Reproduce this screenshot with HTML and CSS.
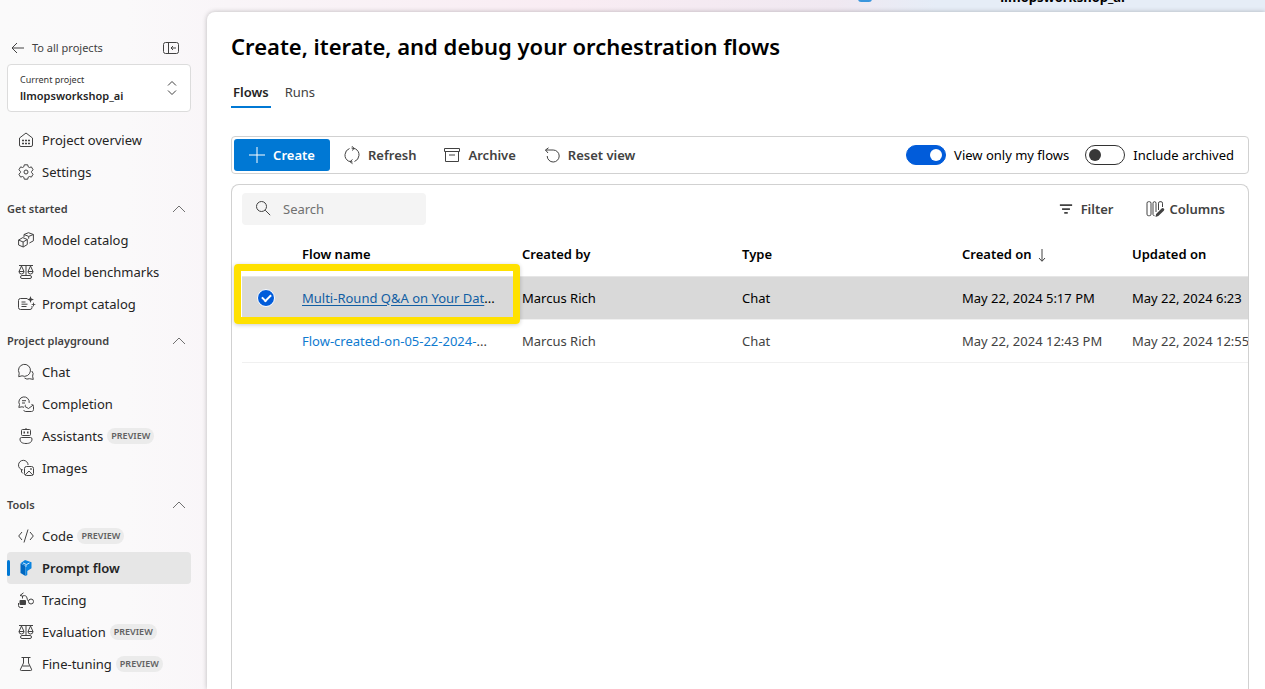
FILE: index.html
```html
<!DOCTYPE html>
<html lang="en">
<head>
<meta charset="utf-8">
<title>Prompt flow</title>
<link rel="stylesheet" href="styles.css">
</head>
<body>
<svg class="defs" aria-hidden="true">
  <symbol id="chevron" viewBox="0 0 16 16"><path d="M2 11 8 5l6 6"/></symbol>
  <symbol id="scales" viewBox="0 0 16 16"><path d="M1 1.500h14M8 1.500v9.500M3.500 2 1 7.500h5zM12.500 2 10 7.500h5zM1 7.500a2.500 2.500 0 0 0 5 0M10 7.500a2.500 2.500 0 0 0 5 0M4 11.500h8a1.500 1.500 0 0 1 0 3H4a1.500 1.500 0 0 1 0-3z"/></symbol>
</svg>
<header class="topbar">
  <span class="topbar-badge"></span>
  <strong class="topbar-project">llmopsworkshop_ai</strong>
</header>
<div class="shell">
  <aside class="sidebar">
    <div class="back-row">
      <a class="back-link" href="#"><svg class="icon back-icon" viewBox="0 0 16 16"><path d="M14 8H2M7 3 2 8l5 5"/></svg>To all projects</a>
      <button class="icon-button" type="button" aria-label="Collapse navigation"><svg class="icon wide" viewBox="0 0 18 16"><rect x="1.500" y="2.500" width="15" height="11" rx="2"/><path d="M6.500 2.500v11M14 8H9M11 6 9 8l2 2"/></svg></button>
    </div>
    <button class="project-picker" type="button">
      <span class="picker-text"><span class="picker-label">Current project</span><span class="picker-name">llmopsworkshop_ai</span></span>
      <svg class="icon picker-icon" viewBox="0 0 16 16"><path d="m4 5.500 4-4 4 4M4 10.500l4 4 4-4"/></svg>
    </button>
    <nav class="nav">
      <a class="nav-item" href="#"><svg class="icon" viewBox="0 0 16 16"><path d="M1.500 6 8 1l6.500 5v7a1.500 1.500 0 0 1-1.500 1.500H3A1.500 1.500 0 0 1 1.500 13z"/><path class="dots" d="M4 8.500h8M4 11.500h8"/></svg>Project overview</a>
      <a class="nav-item" href="#"><svg class="icon" viewBox="0 0 16 16"><path d="m6.300.8-.5 2-1.200.7-2-.6L.9 5.800l1.500 1.500v1.400L.9 10.200l1.700 2.900 2-.6 1.200.7.5 2h3.400l.5-2 1.200-.7 2 .6 1.700-2.900-1.500-1.500V7.300l1.500-1.500-1.700-2.900-2 .6-1.200-.7-.5-2z"/><circle cx="8" cy="8" r="2"/></svg>Settings</a>

      <button class="nav-heading" type="button">Get started<svg class="icon chevron"><use href="#chevron"/></svg></button>
      <a class="nav-item" href="#"><svg class="icon" viewBox="0 0 16 16"><path d="m.6 8 4.200-2.400L9.300 7.500v5L5.200 15 .6 13zM.6 8l4.500 2 4.200-2.500M5.100 10v5M6 5V2.500L10.500.7l4.900 1.800v6.300l-4 2.200M6 2.500l4.700 1.900 4.700-1.900M10.700 4.400v2.300"/></svg>Model catalog</a>
      <a class="nav-item" href="#"><svg class="icon"><use href="#scales"/></svg>Model benchmarks</a>
      <a class="nav-item" href="#"><svg class="icon wide" viewBox="0 0 18 16"><path d="M9.500 2.500h-7a2 2 0 0 0-2 2v7a2 2 0 0 0 2 2H12a2 2 0 0 0 2-2V10M3.500 6h4M3.500 8.200h6M3.500 10.500h5"/><path class="solid" d="m12.500 0 .9 2.600 2.600.9-2.600.9-.9 2.600-.9-2.600L9 3.500l2.600-.9zM15.500 6l.6 1.900 1.900.6-1.900.6-.6 1.900-.6-1.900-1.900-.6 1.900-.6z"/></svg>Prompt catalog</a>

      <button class="nav-heading" type="button">Project playground<svg class="icon chevron"><use href="#chevron"/></svg></button>
      <a class="nav-item" href="#"><svg class="icon" viewBox="0 0 16 16"><path d="M1.200 9.200A6 6 0 1 1 4 11.800l-3.300.9zM6.500 14a5 5 0 0 0 5 .7l3.800.7-.7-3.200a4.500 4.500 0 0 0-.8-5.200"/></svg>Chat</a>
      <a class="nav-item" href="#"><svg class="icon" viewBox="0 0 16 16"><path d="M6 11.300 4 10.800l-3.200.6.7-2.800a5.200 5.200 0 1 1 9.700-1.700M4 4.700h4M4 7h3M7 10.500c0-1 .5-1.500 1-1.500M13.500 8.500c1.300 0 2 .8 2 2v3c0 1.200-.8 2-2 2H8c-1 0-2-.5-2.500-1.500M7 10.500l3.500 2L15.300 9"/></svg>Completion</a>
      <a class="nav-item" href="#"><svg class="icon" viewBox="0 0 16 16"><rect x="3.500" y="1.500" width="9" height="6" rx="1"/><path d="M8 0v1.500M3.500 9.500h9a1.500 1.500 0 0 1 1.500 1.500c0 3-2 4.500-6 4.500S2 14 2 11a1.500 1.500 0 0 1 1.500-1.500z"/><path class="eyes" d="M5.500 4.500h1.500M9 4.500h1.500"/></svg>Assistants<span class="tag">PREVIEW</span></a>
      <a class="nav-item" href="#"><svg class="icon" viewBox="0 0 16 16"><path d="M4.800 9.900A4.800 4.800 0 1 1 10.100 5"/><rect x="6.500" y="6.500" width="9" height="9" rx="2"/><path d="m7.200 15 3.800-4 3.800 4M3.500 10v2L5 13.500"/><circle cx="13" cy="9" r=".5"/></svg>Images</a>

      <button class="nav-heading" type="button">Tools<svg class="icon chevron"><use href="#chevron"/></svg></button>
      <a class="nav-item" href="#"><svg class="icon" viewBox="0 0 16 16"><path d="M4 4 .7 8 4 12M12 4l3.300 4L12 12M10 1.500l-4 13"/></svg>Code<span class="tag">PREVIEW</span></a>
      <a class="nav-item selected" href="#" aria-current="page"><svg class="icon" viewBox="0 0 16 16"><path class="flow-dark" d="M2.500 3.500 7.500 6v10l-5-3z"/><path class="flow-mid" d="M2.500 3.200 7 0l6.500 2.300v6L9.300 11v4l-1.800 1V6z"/><path class="flow-line" d="M5 3l3.500 1.500 3-1.500M8 4.800v2"/></svg>Prompt flow</a>
      <a class="nav-item" href="#"><svg class="icon" viewBox="0 0 16 16"><path d="M4.500 6.500V4L2 3.500 5.500.8M4.500 4c3-1 4 0 4.500 2s.5 3 2 3M.5 11v2.500a2 2 0 0 0 2 2H5"/><rect class="solid" x="1.500" y="8" width="6.500" height="5" rx="1"/><circle cx="13" cy="9.500" r="2.500"/></svg>Tracing</a>
      <a class="nav-item" href="#"><svg class="icon"><use href="#scales"/></svg>Evaluation<span class="tag">PREVIEW</span></a>
      <a class="nav-item" href="#"><svg class="icon" viewBox="0 0 16 16"><path d="M3.500 1.500h9M5.500 1.500V7l-3 6.200a.9.900 0 0 0 .8 1.300h9.400a.9.900 0 0 0 .8-1.300l-3-6.200V1.500M4.500 10h7"/></svg>Fine-tuning<span class="tag">PREVIEW</span></a>
    </nav>
  </aside>

  <main class="main">
    <h1 class="title">Create, iterate, and debug your orchestration flows</h1>
    <div class="tabs" role="tablist">
      <button class="tab active" type="button" role="tab" aria-selected="true">Flows</button>
      <button class="tab" type="button" role="tab" aria-selected="false">Runs</button>
    </div>

    <div class="toolbar">
      <button class="command primary" type="button"><svg class="icon" viewBox="0 0 16 16"><path d="M8 0v16M0 8h16"/></svg>Create</button>
      <button class="command" type="button"><svg class="icon refresh" viewBox="0 0 16 18"><path d="M5.500 2.500a7 7 0 0 0-1 12.600M10.500 15.500a7 7 0 0 0 1-12.600M4.500 15.100 8.500 16M11.500 2.900 7.500 2M8 .2 10.200 2.500 8 4.500M8.500 13.500 6 15.700l2.500 2"/></svg>Refresh</button>
      <button class="command" type="button"><svg class="icon" viewBox="0 0 16 16"><path d="M.5 1.500h15v3H.5zM1.500 4.500v10h13v-10M5 8h6"/></svg>Archive</button>
      <button class="command" type="button"><svg class="icon" viewBox="0 0 16 16"><path d="M4.500.8 1.500 3l2.500 3M1.500 3h7.700a6 6 0 1 1-6 6"/></svg>Reset view</button>
      <div class="switches">
        <label class="switch-label"><input class="switch" type="checkbox" role="switch" checked>View only my flows</label>
        <label class="switch-label"><input class="switch" type="checkbox" role="switch">Include archived</label>
      </div>
    </div>

    <section class="panel">
      <div class="panel-tools">
        <label class="search"><svg class="icon" viewBox="0 0 16 16"><circle cx="6.500" cy="5.500" r="5"/><path d="m10.200 9.200 5 5"/></svg><input class="search-input" type="text" placeholder="Search" aria-label="Search"></label>
        <div class="panel-actions">
          <button class="command" type="button"><svg class="icon filter" viewBox="0 0 16 16"><path d="M1 3.500h14M3.500 8h9M6 12.500h4"/></svg>Filter</button>
          <button class="command" type="button"><svg class="icon wide" viewBox="0 0 18 16"><rect x="1" y=".7" width="4" height="14" rx="1.500"/><path d="M7 13.500V2.200a1.500 1.500 0 0 1 1.500-1.500 1.500 1.500 0 0 1 1.500 1.500V11M7 13.500a1.500 1.500 0 0 0 1.500 1.200M12.500 9V2.200A1.500 1.500 0 0 1 14 .7h1a1.500 1.500 0 0 1 1.500 1.500V6"/><path class="solid" d="m9.500 16 .6-3 5.500-5.500a1.500 1.500 0 0 1 2.200 2.200L12.300 15z"/></svg>Columns</button>
        </div>
      </div>
      <div class="table-wrap">
        <table class="flows">
          <colgroup><col class="col-check"><col class="col-wide"><col class="col-wide"><col class="col-wide"><col class="col-date"><col class="col-date"></colgroup>
          <thead>
            <tr><th></th><th>Flow name</th><th>Created by</th><th>Type</th><th>Created on<svg class="icon sort" viewBox="0 0 16 16"><path d="M8 2v12M5 11l3 3.300L11 11"/></svg></th><th>Updated on</th></tr>
          </thead>
          <tbody>
            <tr class="row-selected"><td><input class="row-check" type="checkbox" aria-label="Select Multi-Round Q&amp;A" checked></td><td><a class="flow-link" href="#">Multi-Round Q&amp;A on Your Dat</a>...</td><td>Marcus Rich</td><td>Chat</td><td>May 22, 2024 5:17 PM</td><td>May 22, 2024 6:23</td></tr>
            <tr><td></td><td><a class="flow-link" href="#">Flow-created-on-05-22-2024-</a>...</td><td>Marcus Rich</td><td>Chat</td><td>May 22, 2024 12:43 PM</td><td>May 22, 2024 12:55</td></tr>
          </tbody>
        </table>
      </div>
      <div class="highlight"></div>
    </section>
  </main>
</div>
</body>
</html>
```
FILE: styles.css
```css
* { box-sizing: border-box; }

body {
  margin: 0;
  height: 100vh;
  display: flex;
  flex-direction: column;
  overflow: hidden;
  font-family: "Noto Sans", "Open Sans", sans-serif;
  font-size: 13px;
  line-height: 20px;
  color: #242424;
  background: linear-gradient(90deg, #fafafa 0%, #faf9fa 10%, #f9f5f8 18%, #f9ecf3 45%, #f0e8f1 66%, #e6edf7 74%, #e6edf7 100%);
}

button, input { font: inherit; color: inherit; }
button { background: none; border: 0; padding: 0; cursor: pointer; }
a { color: inherit; text-decoration: none; }

.defs { position: absolute; width: 0; height: 0; }

.icon {
  width: 16px;
  height: 16px;
  flex: none;
  fill: none;
  stroke: #424242;
  stroke-width: 1;
  overflow: visible;
}
.wide { width: 18px; }
.filter { width: 14px; stroke-width: 2; }
.refresh { height: 18px; }
.solid { fill: #424242; stroke: none; }
.dots { stroke-width: 1.5; stroke-dasharray: 2 1; }
.eyes { stroke-width: 2; }

.topbar {
  height: 12px;
  flex: none;
  display: flex;
  align-items: flex-end;
  justify-content: flex-end;
  gap: 128px;
  padding: 0 140px 5px 0;
  overflow: hidden;
}
.topbar-badge { width: 14px; height: 16px; margin-bottom: 5px; background: #3a96dd; border-radius: 3px; }
.topbar-project { font-size: 13px; font-weight: 700; color: #000; }

.shell { flex: 1; min-height: 0; display: flex; }

.sidebar { width: 207px; flex: none; padding: 20px 16px 0 7px; }

.back-row {
  display: flex;
  align-items: center;
  justify-content: space-between;
  height: 32px;
  padding: 0 11px 0 3px;
}
.back-link { display: flex; align-items: center; gap: 6px; font-size: 11px; color: #424242; }
.icon-button { display: flex; }

.project-picker {
  width: 100%;
  height: 48px;
  display: flex;
  align-items: center;
  justify-content: space-between;
  padding: 0 10px 0 12px;
  background: #fff;
  border: 1px solid #dcdcdc;
  border-radius: 4px;
  text-align: left;
}
.picker-text { display: flex; flex-direction: column; line-height: 16px; }
.picker-label { font-size: 9px; color: #333; }
.picker-name { font-size: 11px; font-weight: 600; }

.nav { display: flex; flex-direction: column; padding-top: 12px; }
.nav-item {
  height: 32px;
  display: flex;
  align-items: center;
  gap: 8px;
  padding-left: 11px;
  border-radius: 4px;
  white-space: nowrap;
}
.nav-item .icon.wide { margin-right: -2px; }
.nav-heading {
  height: 36px;
  display: flex;
  align-items: center;
  justify-content: space-between;
  padding: 6px 4px 0 0;
  font-size: 11px;
  font-weight: 600;
  color: #424242;
}
.chevron { stroke: #707070; }
.tag {
  margin-left: -4px;
  padding: 0 4px;
  border-radius: 8px;
  background: #ebebeb;
  color: #616161;
  font-size: 9px;
  font-weight: 600;
  line-height: 16px;
}
.selected { position: relative; background: #e6e6e6; font-weight: 600; }
.selected::before {
  content: "";
  position: absolute;
  left: 0;
  top: 8px;
  width: 3px;
  height: 16px;
  border-radius: 2px;
  background: #0078d4;
}
.flow-dark { fill: #0067c0; stroke: none; }
.flow-mid { fill: #0a84e0; stroke: none; }
.flow-line { stroke: #cfe7fa; }

.main {
  flex: 1;
  min-width: 0;
  display: flex;
  flex-direction: column;
  padding: 18px 16px 0 24px;
  background: #fff;
  border-top-left-radius: 8px;
  box-shadow: 0 0 5px rgba(0, 0, 0, .25);
}

.title { margin: 0; font-size: 22px; line-height: 32px; font-weight: 600; color: #000; }

.tabs { display: flex; gap: 12px; padding-top: 16px; }
.tab { height: 30px; padding: 0 2px; border-bottom: 2px solid transparent; color: #424242; }
.tab.active { border-bottom-color: #0078d4; font-weight: 600; color: #242424; }

.toolbar {
  height: 38px;
  flex: none;
  display: flex;
  align-items: center;
  margin-top: 28px;
  padding: 0 14px 0 2px;
  border: 1px solid #d1d1d1;
  border-radius: 4px;
}
.command { display: flex; align-items: center; gap: 8px; height: 32px; font-weight: 600; color: #424242; }
.toolbar .command { padding: 0 14px; }
.toolbar .primary { width: 96px; padding: 0; justify-content: center; border-radius: 3px; background: #0078d4; color: #fff; }
.primary .icon { stroke: #fff; }

.switches { display: flex; gap: 16px; margin-left: auto; }
.switch-label { display: flex; align-items: center; gap: 8px; color: #000; }
.switch {
  appearance: none;
  width: 40px;
  height: 20px;
  margin: 0;
  padding: 3px;
  display: flex;
  border: 1px solid #333;
  border-radius: 10px;
  background: #fff;
}
.switch::after { content: ""; width: 12px; height: 12px; border-radius: 50%; background: #383838; }
.switch:checked { justify-content: flex-end; border-color: #015cda; background: #015cda; }
.switch:checked::after { background: #fff; }

.panel {
  position: relative;
  flex: 1;
  min-height: 0;
  display: flex;
  flex-direction: column;
  margin-top: 10px;
  padding: 8px 0 0 10px;
  border: 1px solid #d1d1d1;
  border-bottom: 0;
  border-radius: 8px 8px 0 0;
}
.panel-tools { display: flex; align-items: center; justify-content: space-between; padding-right: 23px; }
.search {
  width: 184px;
  height: 32px;
  display: flex;
  align-items: center;
  gap: 12px;
  padding: 0 13px;
  border-radius: 4px;
  background: #f4f4f4;
}
.search-input { min-width: 0; flex: 1; padding: 0; border: 0; background: none; outline: 0; }
.search-input::placeholder { color: #707070; opacity: 1; }
.panel-actions { display: flex; gap: 32px; }
.panel-actions .command { gap: 6px; }
.panel-actions .command:first-child { gap: 8px; }

.table-wrap { padding-top: 7px; overflow: hidden; }
.flows { width: 1050px; min-width: 100%; table-layout: fixed; border-collapse: collapse; }
.col-check { width: 50px; }
.col-wide { width: 220px; }
.col-date { width: 170px; }
.flows th, .flows td { padding: 0 10px; text-align: left; white-space: nowrap; }
.flows th { height: 44px; font-weight: 600; color: #000; border-bottom: 1px solid #e6e6e6; }
.flows td { height: 43px; color: #424242; border-bottom: 1px solid #f0f0f0; }
.flows .row-selected td { background: #d9d9d9; color: #000; }
.sort { margin-left: 2px; vertical-align: -4px; }
.flow-link { color: #0f7bd0; }
.row-selected .flow-link { color: #115ea3; text-decoration: underline; text-underline-offset: 2px; }

.row-check {
  appearance: none;
  display: flex;
  align-items: center;
  justify-content: center;
  width: 18px;
  height: 18px;
  margin: 0 0 0 5px;
  border: 1px solid #fff;
  border-radius: 50%;
  background: #015cda;
}
.row-check::after {
  content: "";
  width: 7px;
  height: 4px;
  margin-bottom: 2px;
  border: solid #fff;
  border-width: 0 0 2px 2px;
  transform: rotate(-45deg);
}

.highlight {
  position: absolute;
  left: 2px;
  top: 79px;
  width: 286px;
  height: 60px;
  border: 7px solid #ffe100;
  border-radius: 4px;
  box-shadow: 0 1px 4px rgba(0, 0, 0, .2);
  pointer-events: none;
}
```
